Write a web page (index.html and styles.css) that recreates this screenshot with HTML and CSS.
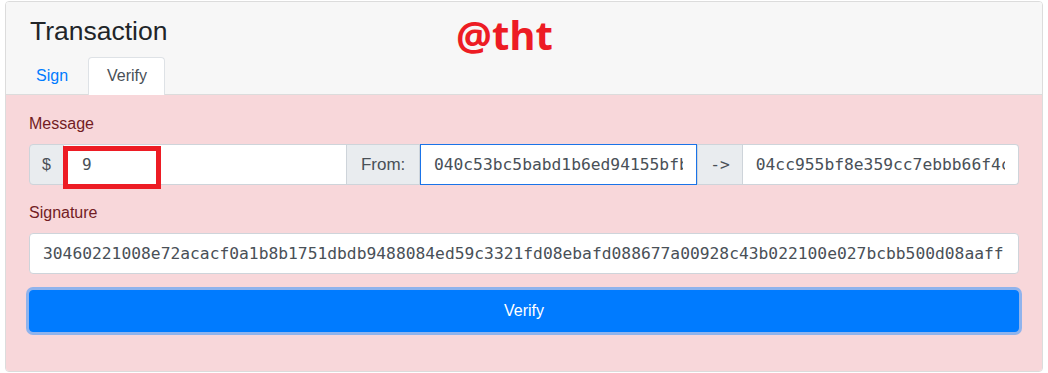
FILE: index.html
```html
<!DOCTYPE html>
<html>
<head>
<meta charset="utf-8">
<link rel="stylesheet" href="styles.css">
</head>
<body>
<div class="card">
  <div class="card-header">
    <h3 class="title">Transaction</h3>
    <div class="tag">@tht</div>
    <ul class="tabs">
      <li class="tab">Sign</li>
      <li class="tab active">Verify</li>
    </ul>
  </div>
  <div class="card-body">
    <div class="form-group">
      <label class="label">Message</label>
      <div class="input-group">
        <span class="addon">$</span>
        <div class="field msg"><span class="val val-sans">9</span><span class="mark"></span></div>
        <span class="addon from">From:</span>
        <div class="field focus"><span class="val">040c53bc5babd1b6ed94155bfb8d5e7a1c3</span></div>
        <span class="addon mono">-&gt;</span>
        <div class="field last"><span class="val">04cc955bf8e359cc7ebbb66f4c2d1a8e9f0</span></div>
      </div>
    </div>
    <div class="form-group">
      <label class="label">Signature</label>
      <div class="field single"><span class="val">30460221008e72acacf0a1b8b1751dbdb9488084ed59c3321fd08ebafd088677a00928c43b022100e027bcbb500d08aaff</span></div>
    </div>
    <button class="btn">Verify</button>
  </div>
</div>
</body>
</html>
```
FILE: styles.css
```css
* { box-sizing: border-box; }
html, body { margin: 0; padding: 0; background: #fff; }
body {
  font-family: "Liberation Sans", Arial, sans-serif;
  font-size: 16px;
  line-height: 24px;
  color: #212529;
}
.card {
  margin: 1px 5px 0 5px;
  border: 1px solid #dcdcdc;
  border-radius: 4px;
  overflow: hidden;
  height: 371px;
  display: flex;
  flex-direction: column;
}
.card-header {
  position: relative;
  background: #f7f7f7;
  border-bottom: 1px solid #dcdcdc;
  padding: 12px 0 0 24px;
  height: 93px;
}
.title {
  margin: 0 0 9px 0;
  font-weight: 400;
  font-size: 26.5px;
  line-height: 34px;
  color: #212529;
}
.tag {
  position: absolute;
  left: 450px;
  top: 8px;
  font-family: "Open Sans", sans-serif;
  font-weight: 700;
  font-size: 40px;
  line-height: 50px;
  color: #ed1c24;
}
.tabs {
  list-style: none;
  margin: 0 0 0 -11px;
  padding: 0;
  display: flex;
}
.tab {
  padding: 6px 16px 6px 16px;
  border: 1px solid transparent;
  border-bottom: 0;
  border-radius: 4px 4px 0 0;
  color: #007bff;
  height: 37px;
}
.tab.active {
  background: #fff;
  color: #495057;
  border-color: #dee2e6;
  height: 38px;
  margin-left: 3px;
  padding: 6px 17px 6px 18px;
  position: relative;
  z-index: 1;
}
.card-body {
  flex: 1;
  background: #f8d7da;
  padding: 17px 23px 0 23px;
}
.form-group { margin-bottom: 16px; }
.label {
  display: block;
  color: #721c24;
  margin-bottom: 8px;
  height: 24px;
}
.input-group {
  display: flex;
  height: 41px;
}
.addon {
  display: flex;
  align-items: center;
  padding: 0 12px;
  background: #e9ecef;
  border: 1px solid #ced4da;
  color: #495057;
  white-space: nowrap;
}
.addon:first-child { border-radius: 4px 0 0 4px; }
.addon.from {
  width: 74px;
  padding: 0 0 0 14px;
  font-size: 17px;
}
.addon.mono {
  font-family: "DejaVu Sans Mono", monospace;
  font-size: 16.3px;
}
.field {
  position: relative;
  flex: 1 1 0;
  min-width: 0;
  background: #fff;
  border: 1px solid #ced4da;
  display: flex;
  align-items: center;
  padding: 0 13px;
  white-space: nowrap;
}
.input-group .field { border-left: 0; border-right: 0; }
.input-group .field.msg { flex: 0 0 282px; }
.input-group .field.focus { border: 1px solid #1a73e8; }
.input-group .field.last { border: 1px solid #ced4da; border-left: 0; border-radius: 0 4px 4px 0; }
.val {
  display: block;
  min-width: 0;
  overflow: hidden;
  font-family: "DejaVu Sans Mono", monospace;
  font-size: 16.3px;
  color: #495057;
}
.val-sans { font-size: 16px; padding-left: 5px; overflow: visible; }
.mark {
  position: absolute;
  left: -1px;
  top: 1px;
  width: 98px;
  height: 43px;
  border: 5px solid #ed1c24;
}
.field.single {
  height: 41px;
  border-radius: 4px;
  padding-left: 13px;
}
.btn {
  display: block;
  width: 100%;
  height: 42px;
  margin-top: 1px;
  border: 1px solid #007bff;
  border-radius: 4px;
  background: #007bff;
  color: #fff;
  font-family: "Liberation Sans", Arial, sans-serif;
  font-size: 16px;
  box-shadow: 0 0 0 3px rgba(38, 143, 255, 0.5);
}
```
